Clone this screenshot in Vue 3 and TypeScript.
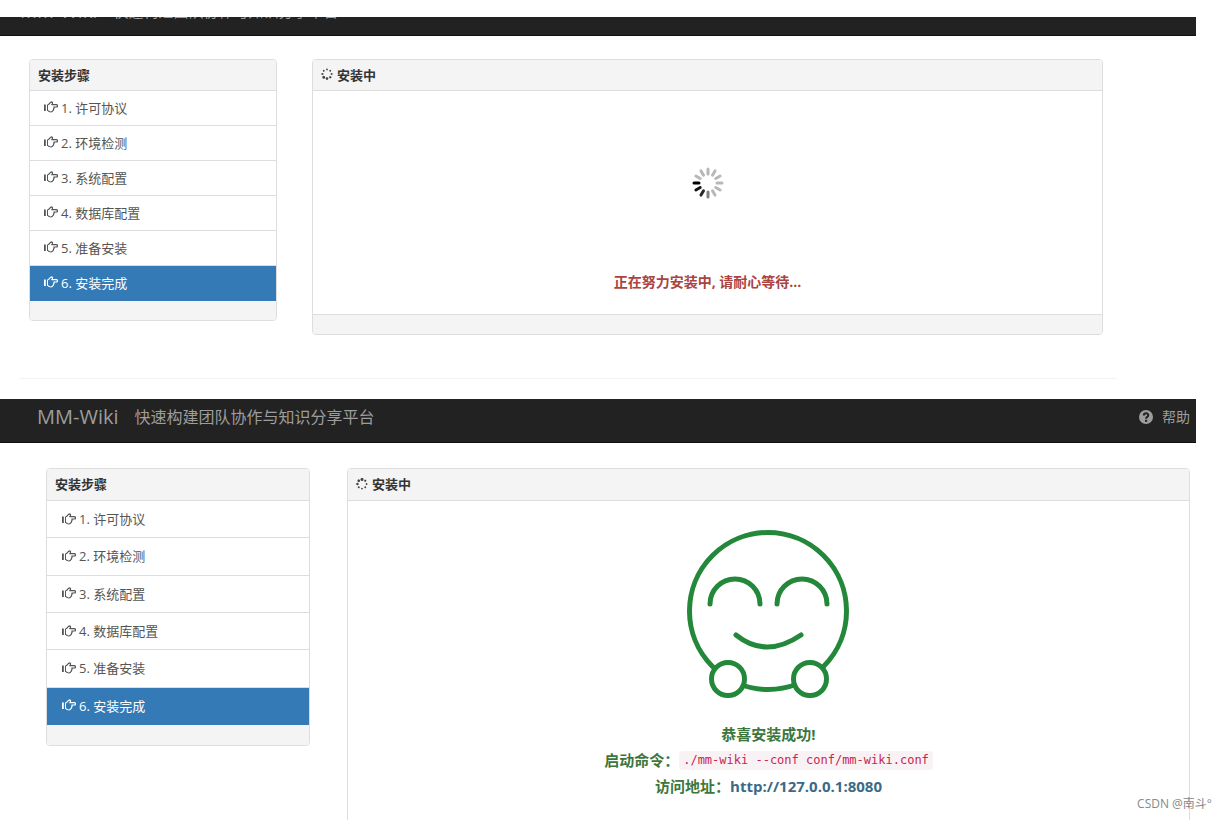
<script setup lang="ts">
interface Screen {
  id: string
  done: boolean
  darkestDot: number
}

const screens: Screen[] = [
  { id: 'progress', done: false, darkestDot: 5 },
  { id: 'finished', done: true, darkestDot: 0 },
]

const steps: string[] = ['许可协议', '环境检测', '系统配置', '数据库配置', '准备安装', '安装完成']
const activeStep = 5

const spokes: string[] = [
  '#b8b8b8', '#b8b8b8', '#b8b8b8', '#808080', '#2a2a2a', '#141414',
  '#000000', '#b8b8b8', '#b8b8b8', '#b8b8b8', '#b8b8b8', '#b8b8b8',
]

const dots = [0, 1, 2, 3, 4, 5, 6, 7]

function dotRadius(dot: number, darkest: number): number {
  const age = (darkest - dot + 8) % 8
  return [1.5, 1.3, 1.2, 1, 0.9, 0.9, 0.9, 1.1][age]
}
</script>

<template>
  <div class="page">
    <section v-for="screen in screens" :key="screen.id" class="screen" :class="screen.id">
      <header class="navbar">
        <a class="brand" href="#">MM-Wiki</a>
        <span class="slogan">快速构建团队协作与知识分享平台</span>
        <a class="help" href="#">
          <svg viewBox="0 0 14 14" width="14" height="14" aria-hidden="true">
            <circle cx="7" cy="7" r="7" fill="#9d9d9d" />
            <path d="M4.8 5.4C4.8 2.6 9.3 2.6 9.3 5.3C9.3 6.9 7.1 6.9 7.1 8.7" fill="none" stroke="#222" stroke-width="2" />
            <rect x="6" y="9.8" width="2.2" height="2" fill="#222" />
          </svg>
          <span>帮助</span>
        </a>
      </header>

      <div class="columns">
        <nav class="panel">
          <div class="panel-heading">安装步骤</div>
          <div class="steps">
            <a
              v-for="(step, index) in steps"
              :key="step"
              href="#"
              class="step"
              :class="{ active: index === activeStep }"
            >
              <svg class="hand" viewBox="0 0 14 12" width="14" height="12" aria-hidden="true">
                <path d="M0 3.5h1.8v6.5H0z" fill="currentColor" />
                <path d="M3 3.5h1v6.5H3z" fill="currentColor" />
                <path
                  d="M4 3.7C5.6 3.2 6.1 1 7.5.9C8.9.9 8.8 2.6 7.8 3.7H12.3A1.1 1.1 0 0 1 12.3 6H9.8C10.4 6.8 10.1 7.6 9.5 8C9.7 8.8 9.4 9.4 8.8 9.7C8.6 10.7 7.8 11 6.8 11C5.5 11 5.1 10 4 9.8"
                  fill="none" stroke="currentColor" stroke-width="1.2" stroke-linejoin="round"
                />
              </svg>
              <span>{{ index + 1 }}. {{ step }}</span>
            </a>
          </div>
          <div class="panel-footer"></div>
        </nav>

        <main class="panel">
          <div class="panel-heading">
            <svg class="dots" viewBox="0 0 12 12" width="12" height="12" aria-hidden="true">
              <circle
                v-for="dot in dots"
                :key="dot"
                cx="6"
                cy="1.4"
                :r="dotRadius(dot, screen.darkestDot)"
                :transform="`rotate(${dot * 45} 6 6)`"
                fill="#444"
              />
            </svg>
            <span>安装中</span>
          </div>

          <div v-if="!screen.done" class="panel-body waiting">
            <svg viewBox="-16 -16 32 32" width="32" height="32" aria-hidden="true">
              <line
                v-for="(colour, index) in spokes"
                :key="index"
                x1="9" y1="0" x2="14" y2="0"
                :stroke="colour"
                stroke-width="3"
                stroke-linecap="round"
                :transform="`rotate(${index * 30})`"
              />
            </svg>
            <strong class="danger">正在努力安装中, 请耐心等待...</strong>
          </div>

          <div v-else class="panel-body success">
            <svg viewBox="0 0 166 170" width="166" height="170" fill="none" stroke="#24883b" stroke-width="5" stroke-linecap="round" aria-hidden="true">
              <circle cx="82" cy="82" r="78.5" />
              <circle cx="42" cy="150" r="16.5" fill="#fff" />
              <circle cx="124" cy="150" r="16.5" fill="#fff" />
              <path d="M24 75A25 25 0 0 1 74 75M91 75A25 25 0 0 1 141 75M50 106Q80 130 115 106" />
            </svg>
            <div class="result">
              <div>恭喜安装成功!</div>
              <div class="command">启动命令：<code>./mm-wiki --conf conf/mm-wiki.conf</code></div>
              <div>访问地址：<a href="http://127.0.0.1:8080">http://127.0.0.1:8080</a></div>
            </div>
          </div>

          <div class="panel-footer"></div>
        </main>
      </div>
      <hr v-if="!screen.done" class="divider">
    </section>
    <div class="watermark">CSDN @南斗°</div>
  </div>
</template>

<style>
body {
  margin: 0;
  background: #fff;
}
</style>

<style scoped>
.page {
  position: relative;
  box-sizing: border-box;
  height: 100vh;
  padding-top: 17px;
  overflow: hidden;
  font-family: "Open Sans", "Noto Sans CJK SC", sans-serif;
  font-size: 13px;
  color: #333;
}

a {
  color: inherit;
  text-decoration: none;
}

.navbar {
  display: flex;
  align-items: center;
  box-sizing: border-box;
  height: 44px;
  margin-right: 31px;
  padding: 0 6px 8px 37px;
  overflow: hidden;
  background: #222;
  border-bottom: 1px solid #101010;
  color: #9d9d9d;
  line-height: 24px;
  white-space: nowrap;
}

.brand {
  font-size: 20px;
}

.slogan {
  margin-left: 16px;
  font-size: 16px;
}

.help {
  display: flex;
  align-items: center;
  gap: 9px;
  margin-left: auto;
  font-size: 14px;
}

.progress .navbar {
  align-items: flex-end;
  height: 19px;
  padding: 0 100px 12px 20px;
}

.progress .help {
  line-height: 28px;
}

.progress .brand {
  font-size: 19px;
}

.progress .slogan {
  font-size: 15px;
}

.columns {
  display: grid;
  align-items: start;
}

.progress .columns {
  grid-template-columns: 248fr 791fr;
  gap: 35px;
  padding: 23px 124px 0 29px;
}

.finished .columns {
  grid-template-columns: 264fr 843fr;
  gap: 37px;
  padding: 25px 37px 0 46px;
}

.panel {
  box-sizing: border-box;
  overflow: hidden;
  border: 1px solid #ddd;
  border-radius: 4px;
  background: #fff;
}

.panel-heading {
  display: flex;
  align-items: center;
  gap: 4px;
  box-sizing: border-box;
  height: 31px;
  padding: 0 8px 2px;
  border-bottom: 1px solid #ddd;
  background: #f4f4f4;
  font-weight: 700;
}

.finished .panel-heading {
  height: 32px;
}

.steps {
  display: grid;
  grid-auto-rows: 1fr;
  height: 210px;
}

.finished .steps {
  height: 224px;
}

.step {
  display: flex;
  align-items: center;
  gap: 3px;
  padding: 0 14px 2px;
  border-bottom: 1px solid #ddd;
  color: #555;
}

.finished .step {
  padding: 0 15px 1px;
}

.step.active {
  border-color: #337ab7;
  background: #337ab7;
  color: #fff;
}

.panel-footer {
  height: 19px;
  background: #f4f4f4;
}

.finished .panel-footer {
  height: 20px;
}

main .panel-footer {
  border-top: 1px solid #ddd;
}

.panel-body {
  display: flex;
  flex-direction: column;
  align-items: center;
}

.waiting {
  height: 147px;
  padding-top: 76px;
  gap: 73px;
}

.danger {
  color: #a94442;
  font-size: 14px;
  line-height: 20px;
}

.success {
  padding: 28px 0 60px;
  gap: 22px;
}

.result {
  color: #3c763d;
  font-size: 15px;
  font-weight: 700;
  line-height: 26px;
  text-align: center;
}

.command {
  display: flex;
  align-items: center;
  justify-content: center;
}

.command code {
  padding: 0 4px;
  border-radius: 4px;
  background: #f9f2f4;
  color: #c7254e;
  font: 12px/19px "DejaVu Sans Mono", monospace;
}

.result a {
  color: #3b6a88;
}

.divider {
  height: 1px;
  margin: 43px 110px 20px 19px;
  border: 0;
  background: #f4f4f4;
}

.watermark {
  position: absolute;
  right: 15px;
  bottom: 7px;
  color: #888;
  font-size: 12px;
  line-height: 18px;
}
</style>
